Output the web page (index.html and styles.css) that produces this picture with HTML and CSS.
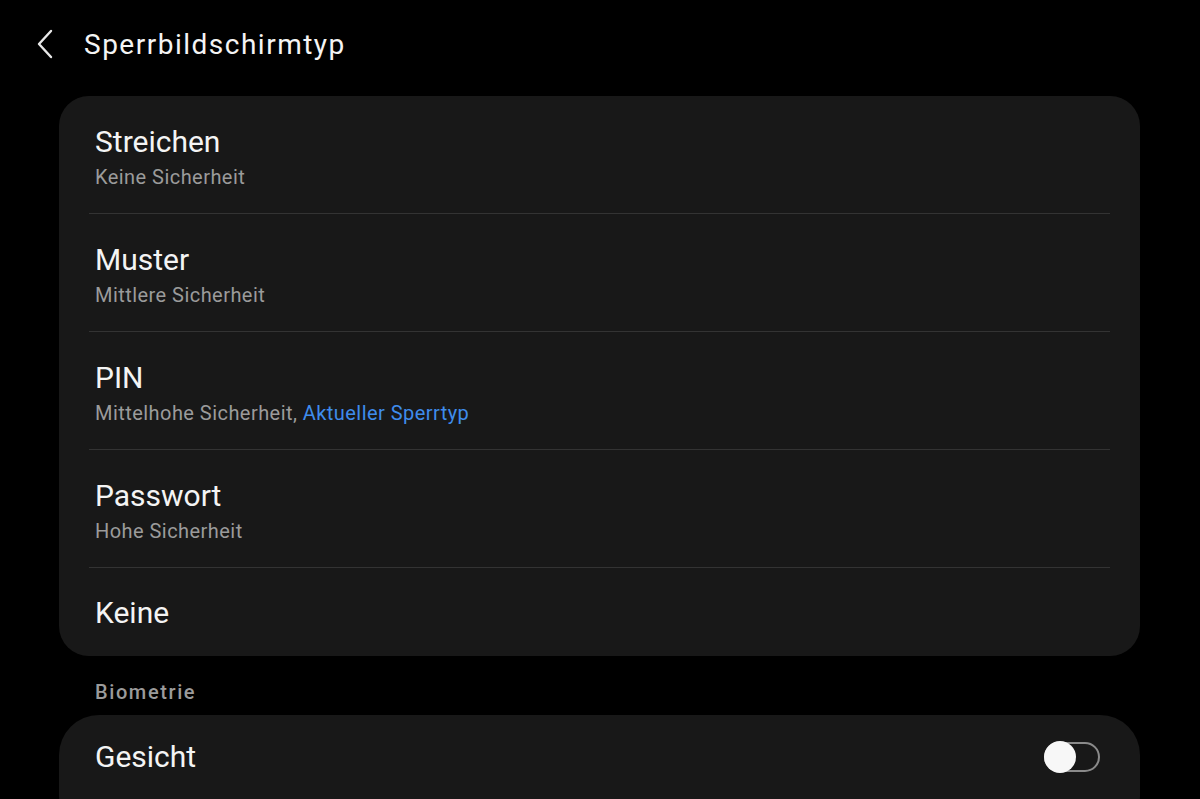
FILE: index.html
```html
<!DOCTYPE html>
<html lang="de">
<head>
<meta charset="utf-8">
<title>Sperrbildschirmtyp</title>
<link rel="stylesheet" href="styles.css">
</head>
<body>
<div class="screen">
  <header class="topbar">
    <button class="back" aria-label="Zurück">
      <svg width="18" height="30" viewBox="0 0 18 30"><path d="M15 2 L3 15 L15 28" fill="none" stroke="#e8e8e8" stroke-width="2.4" stroke-linecap="round" stroke-linejoin="round"/></svg>
    </button>
    <h1 class="title">Sperrbildschirmtyp</h1>
  </header>

  <section class="card">
    <div class="row">
      <div class="row-title">Streichen</div>
      <div class="row-sub">Keine Sicherheit</div>
    </div>
    <div class="row">
      <div class="row-title">Muster</div>
      <div class="row-sub">Mittlere Sicherheit</div>
    </div>
    <div class="row">
      <div class="row-title">PIN</div>
      <div class="row-sub">Mittelhohe Sicherheit, <span class="accent">Aktueller Sperrtyp</span></div>
    </div>
    <div class="row">
      <div class="row-title">Passwort</div>
      <div class="row-sub">Hohe Sicherheit</div>
    </div>
    <div class="row row-single">
      <div class="row-title">Keine</div>
    </div>
  </section>

  <div class="section-label">Biometrie</div>

  <section class="card card-bottom">
    <div class="row row-toggle">
      <div class="row-title">Gesicht</div>
      <span class="toggle"><span class="thumb"></span></span>
    </div>
  </section>
</div>
</body>
</html>
```

FILE: styles.css
```css
html, body {
  margin: 0;
  padding: 0;
  background: #000;
  height: 100%;
  overflow: hidden;
}
body {
  font-family: Roboto, "Noto Sans", "Liberation Sans", sans-serif;
  color: #f2f2f2;
}
.screen {
  display: flex;
  flex-direction: column;
  padding: 0 60px 0 59px;
}
.topbar {
  display: flex;
  align-items: center;
  height: 88px;
  margin-left: -23px;
}
.back {
  background: none;
  border: 0;
  padding: 0;
  width: 18px;
  height: 30px;
  margin-right: 30px;
  display: flex;
}
.title {
  margin: 0;
  font-weight: 400;
  font-size: 28px;
  letter-spacing: 1.5px;
  color: #f4f4f4;
}
.card {
  margin-top: 8px;
  background: #181818;
  border-radius: 30px;
  padding: 0 30px;
}
.row {
  display: flex;
  flex-direction: column;
  height: 118px;
  padding: 29px 0 0 6px;
  border-bottom: 1px solid #333;
  box-sizing: border-box;
}
.row:last-child {
  border-bottom: 0;
}
.row-single {
  height: 88px;
  padding-top: 28px;
}
.row-title {
  font-size: 30px;
  line-height: 34px;
  color: #f4f4f4;
}
.row-sub {
  font-size: 20px;
  line-height: 26px;
  letter-spacing: 0.45px;
  color: #9b9b9b;
  margin-top: 5px;
}
.accent {
  color: #3f8cec;
}
.section-label {
  font-size: 20px;
  font-weight: 500;
  letter-spacing: 1.6px;
  color: #9b9b9b;
  padding: 24px 0 0 36px;
  height: 35px;
}
.card-bottom {
  margin-top: 0;
  border-radius: 40px;
  height: 120px;
}
.row-toggle {
  flex-direction: row;
  align-items: center;
  justify-content: space-between;
  height: 84px;
  padding-top: 0;
}
.toggle {
  position: relative;
  width: 52px;
  height: 26px;
  border: 2px solid #8a8a8a;
  border-radius: 15px;
  margin-right: 10px;
}
.thumb {
  position: absolute;
  left: -2px;
  top: -3px;
  width: 32px;
  height: 32px;
  border-radius: 50%;
  background: #f7f7f7;
}
```
